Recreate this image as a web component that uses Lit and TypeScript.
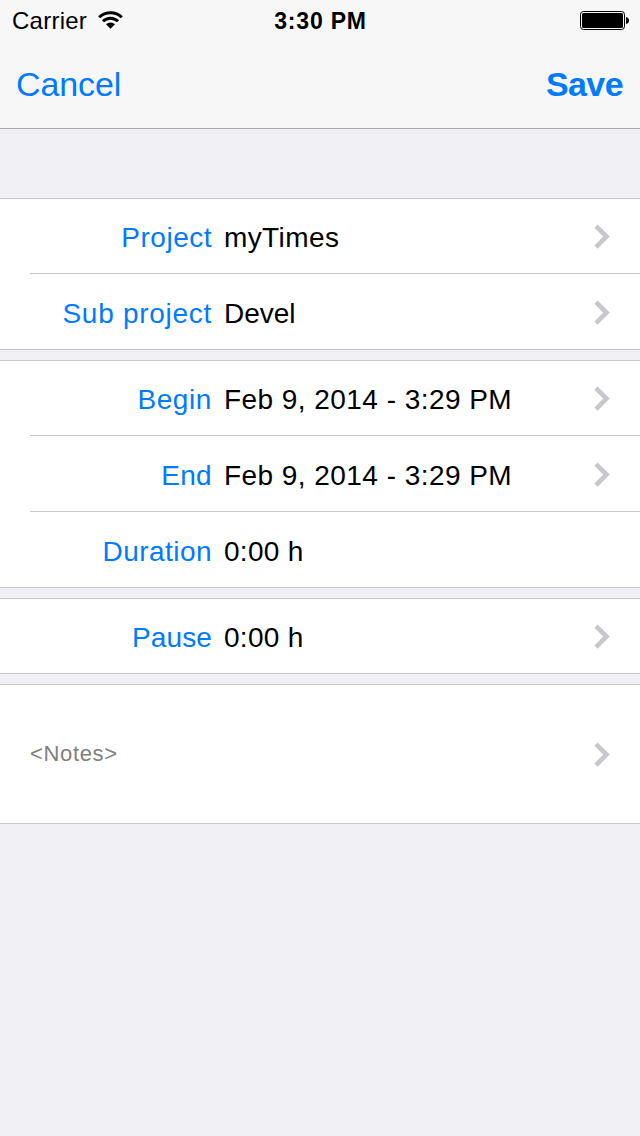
import { LitElement, html, css, nothing } from "lit";
import { customElement, property } from "lit/decorators.js";

@customElement("status-bar")
class StatusBar extends LitElement {
  static styles = css`
    :host { display: grid; grid-template-columns: 1fr auto 1fr; height: 40px; padding: 0 11px 0 12px; align-items: center; font-size: 24px; line-height: 28px; }
    .left { display: flex; align-items: center; gap: 10.5px; }
    .carrier { letter-spacing: 0.25px; padding-top: 2px; }
    .time { font-weight: 700; font-size: 23px; letter-spacing: 0.8px; padding-top: 2px; }
    .battery { justify-self: end; display: block; }
    .wifi { display: block; }
  `;
  render() {
    return html`
      <div class="left">
        <span class="carrier">Carrier</span>
        <svg class="wifi" width="25" height="18" viewBox="0 0 25 18">
          <g fill="none" stroke="#000" stroke-width="2.9">
            <path d="M1.2 6.2 A16.4 16.4 0 0 1 23.8 6.2" />
            <path d="M5 10.3 A10.6 10.6 0 0 1 20 10.3" />
          </g>
          <path d="M12.5 17.8 L8 13.3 A6.4 6.4 0 0 1 17 13.3 Z" fill="#000" />
        </svg>
      </div>
      <span class="time">3:30 PM</span>
      <svg class="battery" width="49" height="19" viewBox="0 0 49 19">
        <rect x="0.5" y="0.5" width="44" height="18" rx="3" fill="none" stroke="#000" />
        <rect x="2" y="2" width="41" height="15" rx="1.5" fill="#000" />
        <path d="M46 6 Q49 6.5 49 9.5 Q49 12.5 46 13 Z" fill="#000" />
      </svg>
    `;
  }
}

const chevron = () => html`
  <svg class="chevron" width="16" height="26" viewBox="0 0 16 26">
    <path d="M2 2.1 L12.5 12.6 L2 23.1" fill="none" stroke="#c7c7cc" stroke-width="4.6" />
  </svg>
`;

@customElement("form-row")
class FormRow extends LitElement {
  @property() label = "";
  @property() value = "";
  @property({ type: Number }) labelSpacing = 0;
  @property({ type: Number }) valueSpacing = 0;
  @property({ type: Boolean }) link = false;
  static styles = css`
    :host { display: flex; align-items: center; box-sizing: border-box; height: 75px; padding: 4px 30px 0 0; font-size: 28px; line-height: 34px; }
    .label { width: 212px; text-align: right; color: #007aff; white-space: nowrap; }
    .value { flex: 1; margin-left: 12px; color: #000; white-space: nowrap; }
    .chevron { display: block; margin-top: -2px; }
  `;
  render() {
    return html`
      <span class="label" style="letter-spacing:${this.labelSpacing}px">${this.label}</span>
      <span class="value" style="letter-spacing:${this.valueSpacing}px">${this.value}</span>
      ${this.link ? chevron() : nothing}
    `;
  }
}

interface Field { label: string; value: string; ls: number; vs: number; link: boolean }

const groups: Field[][] = [
  [
    { label: "Project", value: "myTimes", ls: 0.5, vs: 0.4, link: true },
    { label: "Sub project", value: "Devel", ls: 0.72, vs: 0, link: true },
  ],
  [
    { label: "Begin", value: "Feb 9, 2014 - 3:29 PM", ls: 0.6, vs: 0.45, link: true },
    { label: "End", value: "Feb 9, 2014 - 3:29 PM", ls: 0.3, vs: 0.45, link: true },
    { label: "Duration", value: "0:00 h", ls: 0.45, vs: 0.3, link: false },
  ],
  [{ label: "Pause", value: "0:00 h", ls: 0.1, vs: 0.3, link: true }],
];

@customElement("app-root")
class AppRoot extends LitElement {
  static styles = css`
    :host { display: flex; flex-direction: column; height: 1136px; background: #efeff4; font-family: "Liberation Sans", Arial, sans-serif; color: #000; overflow: hidden; }
    .header { box-sizing: border-box; height: 129px; background: #f7f7f7; border-bottom: 1px solid #a7a7ac; }
    .nav { display: flex; justify-content: space-between; align-items: center; height: 88px; padding: 0 17px 0 16px; box-sizing: border-box; color: #007aff; font-size: 34px; line-height: 40px; }
    .cancel { letter-spacing: -0.1px; }
    .save { font-weight: 700; letter-spacing: -0.6px; }
    .groups { display: flex; flex-direction: column; gap: 10px; padding-top: 69px; }
    .group { background: #fff; border-top: 1px solid #c8c7cc; border-bottom: 1px solid #c8c7cc; }
    .separator { height: 1px; margin-left: 30px; background: #c8c7cc; }
    .first { height: 74px; padding-top: 3px; }
    .notes { display: flex; align-items: center; justify-content: space-between; height: 138px; padding: 0 30px; box-sizing: border-box; font-size: 22px; color: #808080; }
    .placeholder { letter-spacing: 0.65px; }
    .chevron { display: block; margin-top: 2px; }
  `;
  render() {
    return html`
      <div class="header">
        <status-bar></status-bar>
        <div class="nav"><span class="cancel">Cancel</span><span class="save">Save</span></div>
      </div>
      <div class="groups">
        ${groups.map((g) => html`
          <div class="group">
            ${g.map((f, i) => html`
              ${i ? html`<div class="separator"></div>` : nothing}
              <form-row class=${i ? "" : "first"} .label=${f.label} .value=${f.value}
                .labelSpacing=${f.ls} .valueSpacing=${f.vs} .link=${f.link}></form-row>
            `)}
          </div>
        `)}
        <div class="group">
          <div class="notes"><span class="placeholder">&lt;Notes&gt;</span>${chevron()}</div>
        </div>
      </div>
    `;
  }
}
